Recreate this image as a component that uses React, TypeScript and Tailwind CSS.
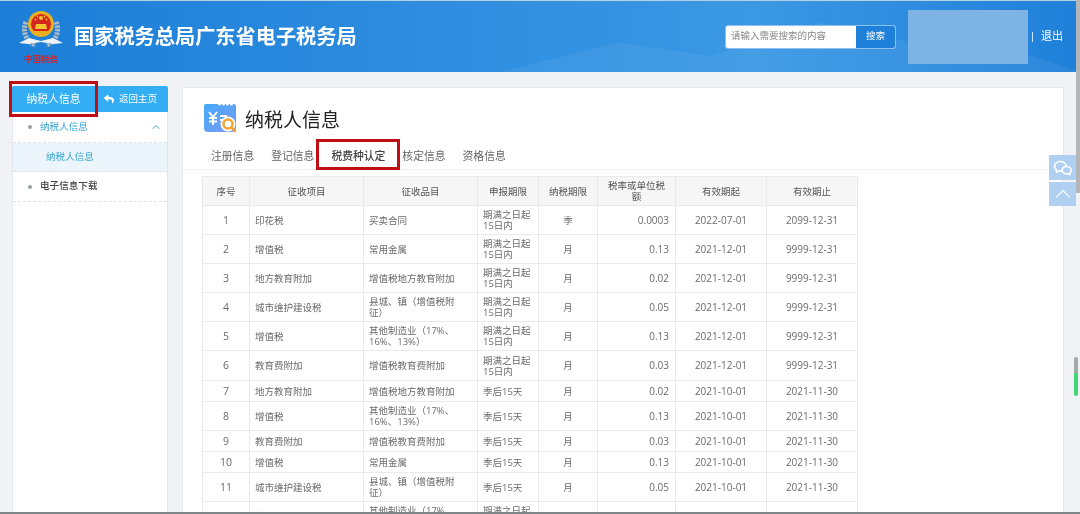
import { ChevronUp } from "lucide-react";
import { FaReply } from "react-icons/fa";
import { RiWechatLine } from "react-icons/ri";

type Row = {
  no: number;
  item: string;
  kind: string;
  term: string;
  period: string;
  rate: string;
  start: string;
  end: string;
  h: string;
};

const within = "期满之日起\n15日内";
const after = "季后15天";

const rows: Row[] = [
  { no: 1, item: "印花税", kind: "买卖合同", term: within, period: "季", rate: "0.0003", start: "2022-07-01", end: "2099-12-31", h: "h-[29px]" },
  { no: 2, item: "增值税", kind: "常用金属", term: within, period: "月", rate: "0.13", start: "2021-12-01", end: "9999-12-31", h: "h-[29px]" },
  { no: 3, item: "地方教育附加", kind: "增值税地方教育附加", term: within, period: "月", rate: "0.02", start: "2021-12-01", end: "9999-12-31", h: "h-[29px]" },
  { no: 4, item: "城市维护建设税", kind: "县城、镇（增值税附\n征）", term: within, period: "月", rate: "0.05", start: "2021-12-01", end: "9999-12-31", h: "h-[29px]" },
  { no: 5, item: "增值税", kind: "其他制造业（17%、\n16%、13%）", term: within, period: "月", rate: "0.13", start: "2021-12-01", end: "9999-12-31", h: "h-[29px]" },
  { no: 6, item: "教育费附加", kind: "增值税教育费附加", term: within, period: "月", rate: "0.03", start: "2021-12-01", end: "9999-12-31", h: "h-[30px]" },
  { no: 7, item: "地方教育附加", kind: "增值税地方教育附加", term: after, period: "月", rate: "0.02", start: "2021-10-01", end: "2021-11-30", h: "h-[21px]" },
  { no: 8, item: "增值税", kind: "其他制造业（17%、\n16%、13%）", term: after, period: "月", rate: "0.13", start: "2021-10-01", end: "2021-11-30", h: "h-[29px]" },
  { no: 9, item: "教育费附加", kind: "增值税教育费附加", term: after, period: "月", rate: "0.03", start: "2021-10-01", end: "2021-11-30", h: "h-[21px]" },
  { no: 10, item: "增值税", kind: "常用金属", term: after, period: "月", rate: "0.13", start: "2021-10-01", end: "2021-11-30", h: "h-[21px]" },
  { no: 11, item: "城市维护建设税", kind: "县城、镇（增值税附\n征）", term: after, period: "月", rate: "0.05", start: "2021-10-01", end: "2021-11-30", h: "h-[29px]" },
  { no: 12, item: "增值税", kind: "其他制造业（17%、\n16%、13%）", term: within, period: "月", rate: "0.13", start: "2021-07-01", end: "2021-09-30", h: "h-[29px]" },
];

const headers = [
  { label: "序号", w: "w-[47px]" },
  { label: "征收项目", w: "w-[114px]" },
  { label: "征收品目", w: "w-[114px]" },
  { label: "申报期限", w: "w-[61px]" },
  { label: "纳税期限", w: "w-[59px]" },
  { label: "税率或单位税\n额", w: "w-[78px]" },
  { label: "有效期起", w: "w-[91px]" },
  { label: "有效期止", w: "w-[91px]" },
];

const tabs = ["注册信息", "登记信息", "税费种认定", "核定信息", "资格信息"];

function Emblem() {
  return (
    <svg viewBox="-2 0 44 40" className="h-[40px] w-[44px]">
      <path d="M5 12c-4 9 0 20 10 23M35 12c4 9 0 20-10 23" fill="none" stroke="#aeb9c3" strokeWidth="5" strokeDasharray="2.5 1" />
      <path d="M-2 33l10-5 12 3 12-3 10 5-9 1-13-2-13 2z" fill="#eef2f5" />
      <circle cx="20" cy="14" r="13" fill="#e8b021" />
      <circle cx="20" cy="14" r="10" fill="#d5231d" />
      <path d="M11 21h18v3H11z" fill="#e8b021" />
      <path d="M14 19l1-5h10l1 5z" fill="#f3c531" />
      <circle cx="20" cy="8" r="2" fill="#f3c531" />
      <circle cx="14.5" cy="9.5" r="0.9" fill="#f3c531" />
      <circle cx="25.5" cy="9.5" r="0.9" fill="#f3c531" />
      <circle cx="16.5" cy="6.5" r="0.9" fill="#f3c531" />
      <circle cx="23.5" cy="6.5" r="0.9" fill="#f3c531" />
    </svg>
  );
}

function TicketIcon() {
  return (
    <svg viewBox="0 0 34 30" className="h-[30px] w-[34px]">
      <defs>
        <linearGradient id="ticket" x1="0" y1="0" x2="1" y2="1">
          <stop offset="0" stopColor="#45a9f8" />
          <stop offset="1" stopColor="#7b9bf5" />
        </linearGradient>
      </defs>
      <path d="M2 0h12a1.5 1.5 0 0 0 3 0h1a1.5 1.5 0 0 0 3 0h1a1.5 1.5 0 0 0 3 0h1a1.5 1.5 0 0 0 3 0h1a2 2 0 0 1 2 2v22a4 4 0 0 1-4 4H4a4 4 0 0 1-4-4V2a2 2 0 0 1 2-2z" fill="url(#ticket)" />
      <path d="M5 8l4 5 4-5M9 13v8M5 14h8M5 17.5h8M16 12h7M16 16h3" fill="none" stroke="#fff" strokeWidth="2" />
      <circle cx="24" cy="20" r="7.5" fill="#fff" />
      <circle cx="24" cy="20" r="4.5" fill="#fff" stroke="#f5a431" strokeWidth="2.5" />
      <path d="M27.5 23.5l3.5 3.5" stroke="#f5a431" strokeWidth="2.5" strokeLinecap="round" />
    </svg>
  );
}

function Header() {
  return (
    <header className="relative flex h-[72px] shrink-0 items-center border-t border-[#b9cfe2] bg-gradient-to-r from-[#1c7ed8] via-[#3a98e4] via-70% to-[#1f80d9] pl-[18px] pr-[17px] text-white">
      <svg viewBox="0 0 1080 72" preserveAspectRatio="none" className="absolute inset-0 h-full w-full opacity-5">
        <path d="M500 72l120-30 90 14 110-34 90 20 60-8 110 38z" fill="#fff" />
      </svg>
      <div className="relative flex w-[46px] flex-col items-center">
        <Emblem />
        <span className="mt-[4px] whitespace-nowrap text-[8.5px] font-bold leading-[10px] text-[#d3252a] [font-family:'Liberation_Serif','Noto_Sans_CJK_SC',serif]">中国税务</span>
      </div>
      <h1 className="relative ml-[10px] text-[20.2px] font-semibold">国家税务总局广东省电子税务局</h1>
      <div className="relative ml-auto flex h-[24px] w-[171px] overflow-hidden rounded-[3px] border border-[#8cc0ee] bg-white text-[9.5px]">
        <span className="flex flex-1 items-center pl-[5px] text-[#888]">请输入需要搜索的内容</span>
        <span className="flex w-[39px] items-center justify-center bg-[#1f80d9] text-white">搜索</span>
      </div>
      <div className="relative ml-[12px] h-[54px] w-[120px] bg-[#7db4e5]" />
      <span className="relative ml-[4px] h-[10px] w-px bg-[#cfe6fa]" />
      <span className="relative ml-[8px] text-[11px]">退出</span>
    </header>
  );
}

function Sidebar() {
  return (
    <aside className="flex w-[156px] shrink-0 flex-col">
      <div className="flex h-[26px] rounded-t-[2px] bg-[#33adf4] text-white">
        <div className="relative flex w-[83px] items-center justify-center text-[10.8px]">
          纳税人信息
          <span className="absolute -inset-x-[3px] -inset-y-[5px] border-[3px] border-[#c00f14]" />
        </div>
        <div className="flex flex-1 items-center gap-[5px] pl-[9px] text-[9.5px]">
          <FaReply className="h-[10px] w-[10px]" />
          返回主页
        </div>
      </div>
      <nav className="flex-1 border-x border-[#e3e6ea] bg-white text-[9.6px]">
        <div className="flex h-[31px] items-center border-b border-dashed border-[#dde3e8] pl-[15px] pr-[5px] text-[#3aa7d6]">
          <span className="h-[4px] w-[4px] rounded-full bg-[#9aa0a6]" />
          <span className="ml-[8px]">纳税人信息</span>
          <ChevronUp className="ml-auto h-[12px] w-[12px]" />
        </div>
        <div className="flex h-[29px] items-center border-b border-dashed border-[#dde3e8] bg-[#ecf5fc] pl-[33px] text-[#3aa7d6]">纳税人信息</div>
        <div className="flex h-[30px] items-center border-b border-dashed border-[#dde3e8] pl-[15px] font-medium text-[#444]">
          <span className="h-[4px] w-[4px] rounded-full bg-[#9aa0a6]" />
          <span className="ml-[8px]">电子信息下载</span>
        </div>
      </nav>
    </aside>
  );
}

function TaxTable() {
  return (
    <table className="w-[655px] table-fixed border-collapse text-[9.5px] leading-[11px] text-[#6b6b6b]">
      <thead>
        <tr className="h-[29px] bg-[#f6f6f6] text-[#555]">
          {headers.map((h) => (
            <th key={h.label} className={`${h.w} whitespace-pre-line border border-[#eaeaea] px-[5px] font-normal`}>
              {h.label}
            </th>
          ))}
        </tr>
      </thead>
      <tbody>
        {rows.map((r) => (
          <tr key={r.no} className={r.h}>
            <td className="border border-[#eaeaea] text-center text-[10.5px]">{r.no}</td>
            <td className="border border-[#eaeaea] px-[5px]">{r.item}</td>
            <td className="whitespace-pre-line border border-[#eaeaea] px-[5px]">{r.kind}</td>
            <td className="whitespace-pre-line border border-[#eaeaea] px-[5px]">{r.term}</td>
            <td className="border border-[#eaeaea] text-center">{r.period}</td>
            <td className="border border-[#eaeaea] px-[6px] text-right text-[10px]">{r.rate}</td>
            <td className="border border-[#eaeaea] text-center text-[10px]">{r.start}</td>
            <td className="border border-[#eaeaea] text-center text-[10px]">{r.end}</td>
          </tr>
        ))}
      </tbody>
    </table>
  );
}

function Main() {
  return (
    <main className="ml-[14px] mt-px w-[882px] shrink-0 overflow-hidden border border-[#e6e8ec] bg-white pt-[16px]">
      <div className="flex h-[30px] items-center pl-[21px]">
        <TicketIcon />
        <h2 className="ml-[7px] mt-[2px] text-[19px] leading-[28px] text-[#222]">纳税人信息</h2>
      </div>
      <div className="mt-[9px] flex h-[27px] items-center gap-[17px] border-b border-[#eeeeee] pl-[28px] text-[10.8px] text-[#666]">
        {tabs.map((t) =>
          t === "税费种认定" ? (
            <span key={t} className="relative font-medium text-[#444]">
              {t}
              <span className="absolute -inset-x-[15px] -top-[9px] -bottom-[6px] border-[3px] border-[#c00f14]" />
            </span>
          ) : (
            <span key={t}>{t}</span>
          ),
        )}
      </div>
      <div className="mt-[6px] pl-[19px]">
        <TaxTable />
      </div>
    </main>
  );
}

export default function App() {
  return (
    <div className="relative flex h-[514px] w-[1080px] flex-col overflow-hidden bg-[#f0f2f5] [font-family:'Open_Sans','Noto_Sans_CJK_SC',sans-serif] blur-[0.4px]">
      <Header />
      <div className="flex min-h-0 flex-1 pl-[12px] pt-[14px]">
        <Sidebar />
        <Main />
      </div>
      <div className="absolute right-[4px] top-[155px] flex w-[27px] flex-col gap-[2px] text-white">
        <span className="flex h-[25px] items-center justify-center bg-[#afd0f0]">
          <RiWechatLine className="h-[20px] w-[20px]" />
        </span>
        <span className="flex h-[24px] items-center justify-center bg-[#afd0f0]">
          <svg viewBox="0 0 20 12" className="h-[10px] w-[18px]" fill="none" stroke="#fff" strokeWidth="1.5">
            <path d="M2 10l8-8 8 8" />
          </svg>
        </span>
      </div>
      <div className="absolute right-0 top-0 h-[193px] w-[4px] bg-[#b4b6b8]" />
      <div className="absolute right-[2px] top-[357px] flex h-[39px] w-[4px] flex-col overflow-hidden rounded-full">
        <span className="h-[16px] bg-[#a4a6a8]" />
        <span className="flex-1 bg-[#3fd573]" />
      </div>
      <div className="absolute inset-x-0 bottom-0 h-[2px] bg-[#7f8587]" />
    </div>
  );
}
